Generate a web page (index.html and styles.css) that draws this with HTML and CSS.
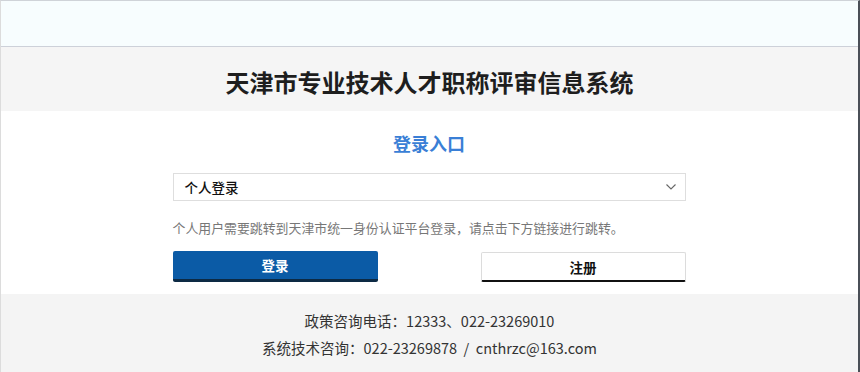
FILE: index.html
```html
<!DOCTYPE html>
<html lang="zh-CN">
<head>
<meta charset="utf-8">
<title>天津市专业技术人才职称评审信息系统</title>
<link rel="stylesheet" href="styles.css">
</head>
<body>
<div class="page">
  <div class="topbar"></div>
  <div class="header">
    <h1 class="title">天津市专业技术人才职称评审信息系统</h1>
  </div>
  <div class="main">
    <div class="panel">
      <h2 class="entry">登录入口</h2>
      <div class="select">
        <span class="select-text">个人登录</span>
        <svg class="chev" width="10" height="6" viewBox="0 0 10 6"><path d="M0.5 0.5 L5 5 L9.5 0.5" fill="none" stroke="#666" stroke-width="1.1"/></svg>
      </div>
      <p class="hint">个人用户需要跳转到天津市统一身份认证平台登录，请点击下方链接进行跳转。</p>
      <div class="buttons">
        <button class="btn btn-login">登录</button>
        <button class="btn btn-reg">注册</button>
      </div>
    </div>
  </div>
  <div class="footer">
    <p class="fline">政策咨询电话：12333、022-23269010</p>
    <p class="fline">系统技术咨询：022-23269878 &nbsp;/&nbsp; cnthrzc@163.com</p>
  </div>
</div>
</body>
</html>
```

FILE: styles.css
```css
html, body {
  margin: 0;
  padding: 0;
  background: #ffffff;
}
body {
  font-family: "Noto Sans CJK SC", "Noto Sans", sans-serif;
  color: #333;
}
.page {
  width: 860px;
  height: 372px;
  box-sizing: border-box;
  border-top: 1px solid #cfd3d8;
  border-left: 1px solid #dcdcdc;
  border-right: 2px solid #4a4f57;
  display: flex;
  flex-direction: column;
  overflow: hidden;
}
.topbar {
  height: 45px;
  background: #f7fdfe;
  border-bottom: 1px solid #cdd1d9;
  flex: none;
}
.header {
  height: 64px;
  background: #f5f5f5;
  display: flex;
  align-items: center;
  justify-content: center;
  flex: none;
}
.title {
  margin: 0;
  font-size: 24px;
  font-weight: 700;
  color: #1e1e1e;
  line-height: 30px;
  padding-top: 6px;
}
.main {
  background: #fff;
  height: 183px;
  flex: none;
  display: flex;
  justify-content: center;
}
.panel {
  width: 513px;
  padding-top: 20px;
  margin-left: -1px;
}
.entry {
  margin: 0;
  text-align: center;
  font-size: 18px;
  line-height: 24px;
  font-weight: 700;
  color: #3a7fd6;
}
.select {
  margin-top: 18px;
  height: 28px;
  box-sizing: border-box;
  border: 1px solid #dedede;
  display: flex;
  align-items: center;
  justify-content: space-between;
  padding: 0 9px 0 11px;
}
.select-text {
  font-size: 13.5px;
  color: #111;
  font-weight: 500;
}
.hint {
  margin: 18px 0 0;
  font-size: 12.9px;
  line-height: 18px;
  color: #777;
  white-space: nowrap;
}
.buttons {
  margin-top: 14px;
  display: flex;
  justify-content: space-between;
}
.btn {
  width: 205px;
  height: 31px;
  box-sizing: border-box;
  font-family: "Noto Sans CJK SC", sans-serif;
  font-size: 13.5px;
  font-weight: 700;
  cursor: pointer;
  padding: 0;
  border-radius: 2px;
}
.btn-login {
  background: #0b5ba6;
  color: #fff;
  border: none;
  border-bottom: 3px solid #0d2a44;
}
.btn-reg {
  background: #fff;
  color: #111;
  border: 1px solid #dcdcdc;
  border-bottom: 2px solid #111;
  width: 205px;
  margin-top: 1px;
  height: 30px;
}
.footer {
  flex: 1;
  background: #f4f4f4;
  padding-top: 13px;
  text-align: center;
}
.fline {
  margin: 0;
  font-size: 14.5px;
  line-height: 27px;
  color: #333;
}
```
